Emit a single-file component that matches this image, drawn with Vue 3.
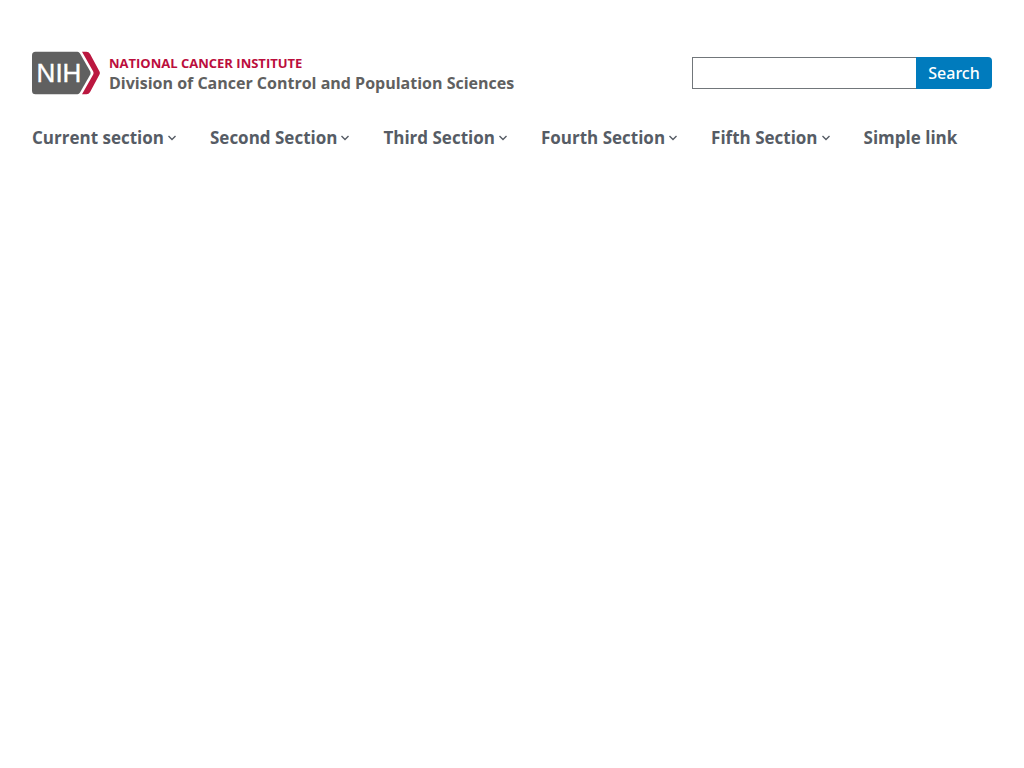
<script setup>
import { ref } from 'vue'

const query = ref('')
const openSection = ref('')
const sections = [
  'Current section',
  'Second Section',
  'Third Section',
  'Fourth Section',
  'Fifth Section',
]

function toggle(name) {
  openSection.value = openSection.value === name ? '' : name
}
</script>

<template>
  <header class="site-header">
    <div class="masthead">
      <a href="#" class="brand">
        <svg class="brand-mark" viewBox="0 0 69 44" aria-hidden="true">
          <path class="mark-grey" d="M3.5.8H45.5Q47 .8 48 2.4L58.3 20.6Q59 22 58.3 23.4L48 41.6Q47 43.2 45.5 43.2H3.5Q0 43.2 0 39.7V4.3Q0 .8 3.5.8Z" />
          <path class="mark-red" d="M50 .8H54.4Q56.8.8 58.1 3L67.5 20.4Q68.4 22 67.5 23.6L58.1 41Q56.8 43.2 54.4 43.2H50L61.2 23.4Q62 22 61.2 20.6Z" />
          <text class="mark-text" x="27" y="31" text-anchor="middle">NIH</text>
        </svg>
        <span class="brand-text">
          <span class="brand-institute">NATIONAL CANCER INSTITUTE</span>
          <span class="brand-division">Division of Cancer Control and Population Sciences</span>
        </span>
      </a>
      <form class="search" role="search" @submit.prevent>
        <input v-model="query" class="search-input" type="search" aria-label="Search" />
        <button class="search-button" type="submit">Search</button>
      </form>
    </div>
    <nav class="primary-nav" aria-label="Primary navigation">
      <ul class="nav-list">
        <li v-for="name in sections" :key="name">
          <button
            class="nav-item"
            type="button"
            :aria-expanded="openSection === name"
            @click="toggle(name)"
          >
            {{ name }}
            <svg class="chevron" viewBox="0 0 8 6" aria-hidden="true">
              <path d="M.5 1 4 4.5 7.5 1" />
            </svg>
          </button>
        </li>
        <li><a href="#" class="nav-item">Simple link</a></li>
      </ul>
    </nav>
  </header>
</template>

<style>
body {
  background: #fff;
}
</style>

<style scoped>
.site-header {
  padding: 51px 32px 0;
  font-family: "Open Sans", sans-serif;
}
.masthead {
  display: flex;
  align-items: center;
  justify-content: space-between;
  gap: 32px;
}
.brand {
  display: flex;
  align-items: center;
  gap: 8px;
  text-decoration: none;
  white-space: nowrap;
}
.brand-mark {
  display: block;
  width: 69px;
  height: 44px;
}
.mark-grey {
  fill: #606060;
}
.mark-red {
  fill: #bb1840;
}
.mark-text {
  fill: #fff;
  stroke: #fff;
  stroke-width: 0.4;
  font: 26px "Liberation Sans", sans-serif;
}
.brand-text {
  display: flex;
  flex-direction: column;
  font-weight: 700;
  line-height: 20px;
}
.brand-institute {
  color: #bb0e3d;
  font-size: 13px;
}
.brand-division {
  color: #606060;
  font-size: 16px;
}
.search {
  display: flex;
  width: 300px;
}
.search-input {
  flex: 1;
  min-width: 0;
  height: 32px;
  box-sizing: border-box;
  margin: 0;
  padding: 0 8px;
  border: 1px solid #71767a;
  border-right: 0;
  border-radius: 0;
  background: #fff;
  font: 16px "Open Sans", sans-serif;
  appearance: none;
}
.search-button {
  min-width: 76px;
  height: 32px;
  margin: 0;
  padding: 0 12px;
  border: 0;
  border-radius: 0 4px 4px 0;
  background: #007bbd;
  color: #fff;
  font: 500 16px "Noto Sans", sans-serif;
  cursor: pointer;
}
.primary-nav {
  margin-top: 32px;
}
.nav-list {
  display: flex;
  gap: 34px;
  margin: 0;
  padding: 0;
  list-style: none;
}
.nav-item {
  display: flex;
  align-items: center;
  gap: 4px;
  padding: 0;
  border: 0;
  background: none;
  color: #565c65;
  font: 700 17px/22px "Open Sans", sans-serif;
  text-decoration: none;
  white-space: nowrap;
  cursor: pointer;
}
.chevron {
  width: 8px;
  height: 6px;
  fill: none;
  stroke: #565c65;
  stroke-width: 1.4;
}
</style>
